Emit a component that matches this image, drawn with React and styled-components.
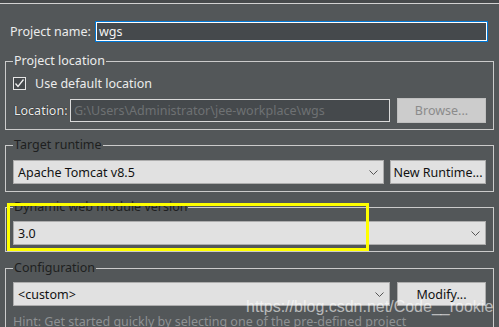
import styled, { createGlobalStyle } from "styled-components"

const GlobalStyle = createGlobalStyle`
  html, body {
    margin: 0;
    padding: 0;
    background: #535759;
  }
  body {
    font-family: "Noto Sans", "Liberation Sans", sans-serif;
    font-size: 12px;
    color: #e8e8e8;
    overflow: hidden;
  }
`;

const Page = styled.div`
  position: relative;
  width: 499px;
  height: 327px;
  overflow: hidden;
  background: #535759;
`;

const TopStrip = styled.div`
  height: 3px;
  background: #474a4c;
  border-bottom: 1px solid #d2d2d2;
`;

const Content = styled.div`
  display: flex;
  flex-direction: column;
  padding: 0 5px;
`;

const NameRow = styled.div`
  display: flex;
  align-items: center;
  margin: 17px 6px 0 5px;
  height: 21px;
`;

const Label = styled.span`
  width: ${p => p.$width}px;
  flex-shrink: 0;
  font-size: 12.5px;
  color: #ececec;
  ${p => p.$outlined && `
    text-shadow: 0 0 1px #222, 0 0 1px #222;
    margin-left: 1px;
  `}
`;

const TextInput = styled.div`
  flex: 1;
  box-sizing: border-box;
  height: ${p => p.$height}px;
  display: flex;
  align-items: center;
  padding-left: 3px;
  background: #45494c;
  border: 1px solid ${p => p.$focused ? "#0078d7" : "#dadada"};
  box-shadow: ${p => p.$focused ? "inset 0 0 0 1px #ffffff" : "none"};
  color: ${p => p.$disabled ? "#6e7173" : "#f2f2f2"};
  font-size: 12.5px;
  white-space: nowrap;
  overflow: hidden;
`;

const Group = styled.fieldset`
  margin: ${p => p.$top}px 0 0;
  padding: 0 7px ${p => p.$bottom}px;
  border: 1px solid #cbcbcb;
  min-width: 0;
`;

const Legend = styled.legend`
  padding: 0 1px;
  height: 16px;
  line-height: 16px;
  font-size: 12.5px;
  color: ${p => p.$dark ? "#1e1f20" : "#ececec"};
`;

const CheckRow = styled.label`
  display: flex;
  align-items: center;
  gap: 9px;
  margin-top: 8px;
  height: 12px;
  font-size: 12.5px;
  color: #ececec;
`;

const CheckBox = styled.span`
  width: 13px;
  height: 13px;
  box-sizing: border-box;
  border: 1px solid #e6e6e6;
  background: #45494c;
  display: flex;
  align-items: center;
  justify-content: center;
`;

const Row = styled.div`
  display: flex;
  align-items: center;
  gap: ${p => p.$gap || 0}px;
  margin-top: ${p => p.$top}px;
  height: ${p => p.$height}px;
`;

const Combo = styled.div`
  flex: 1;
  box-sizing: border-box;
  height: 24px;
  display: flex;
  align-items: center;
  justify-content: space-between;
  padding: 0 5px 0 4px;
  background: #e1e1e1;
  border: 1px solid #adadad;
  color: #111;
  font-size: 12.5px;
`;

const Button = styled.div`
  width: ${p => p.$width}px;
  flex-shrink: 0;
  box-sizing: border-box;
  height: ${p => p.$height || 24}px;
  display: flex;
  align-items: center;
  justify-content: center;
  background: ${p => p.$disabled ? "#cccccc" : "#e1e1e1"};
  border: 1px solid ${p => p.$disabled ? "#bfbfbf" : "#adadad"};
  color: ${p => p.$disabled ? "#8b8b8b" : "#111"};
  font-size: 12.5px;
`;

const Hint = styled.div`
  margin-top: 7px;
  font-size: 12.5px;
  color: #8e9193;
  white-space: nowrap;
`;

const Highlight = styled.div`
  position: absolute;
  left: 7px;
  top: 203px;
  width: 362px;
  height: 48px;
  box-sizing: border-box;
  border: 3px solid #ffff00;
  pointer-events: none;
`;

const Watermark = styled.div`
  position: absolute;
  left: 246px;
  top: 298px;
  font-family: "Liberation Sans", Arial, sans-serif;
  font-size: 16px;
  color: rgba(255, 255, 255, 0.6);
  white-space: nowrap;
  pointer-events: none;
`;

const Chevron = () => (
  <svg width="9" height="5" viewBox="0 0 9 5">
    <path d="M0.5 0.5 L4.5 4.5 L8.5 0.5" fill="none" stroke="#555" strokeWidth="1" />
  </svg>
);

const Check = () => (
  <svg width="11" height="11" viewBox="0 0 11 11">
    <path d="M1.5 5.5 L4 8.5 L9.5 1.5" fill="none" stroke="#f0f0f0" strokeWidth="1.3" />
  </svg>
);

const App = () => {
  return (
    <Page>
      <GlobalStyle />
      <TopStrip />
      <Content>
        <NameRow>
          <Label $width={85}>Project name:</Label>
          <TextInput $height={21} $focused>wgs</TextInput>
        </NameRow>

        <Group $top={11} $bottom={6}>
          <Legend>Project location</Legend>
          <CheckRow>
            <CheckBox><Check /></CheckBox>
            Use default location
          </CheckRow>
          <Row $top={9} $height={25}>
            <Label $width={56} $outlined>Location:</Label>
            <TextInput $height={23} $disabled>G:\Users\Administrator\jee-workplace\wgs</TextInput>
            <Button $width={89} $height={25} $disabled style={{ marginLeft: 7 }}>Browse...</Button>
          </Row>
        </Group>

        <Group $top={7} $bottom={7}>
          <Legend $dark>Target runtime</Legend>
          <Row $top={7} $height={24} $gap={6}>
            <Combo>Apache Tomcat v8.5<Chevron /></Combo>
            <Button $width={96}>New Runtime...</Button>
          </Row>
        </Group>

        <Group $top={7} $bottom={6}>
          <Legend $dark>Dynamic web module version</Legend>
          <Row $top={6} $height={24}>
            <Combo>3.0<Chevron /></Combo>
          </Row>
        </Group>

        <Group $top={8} $bottom={10}>
          <Legend $dark>Configuration</Legend>
          <Row $top={6} $height={24} $gap={7}>
            <Combo>&lt;custom&gt;<Chevron /></Combo>
            <Button $width={89}>Modify...</Button>
          </Row>
          <Hint>Hint: Get started quickly by selecting one of the pre-defined project</Hint>
        </Group>
      </Content>
      <Highlight />
      <Watermark>https://blog.csdn.net/Code__rookie</Watermark>
    </Page>
  )
}

export default App
